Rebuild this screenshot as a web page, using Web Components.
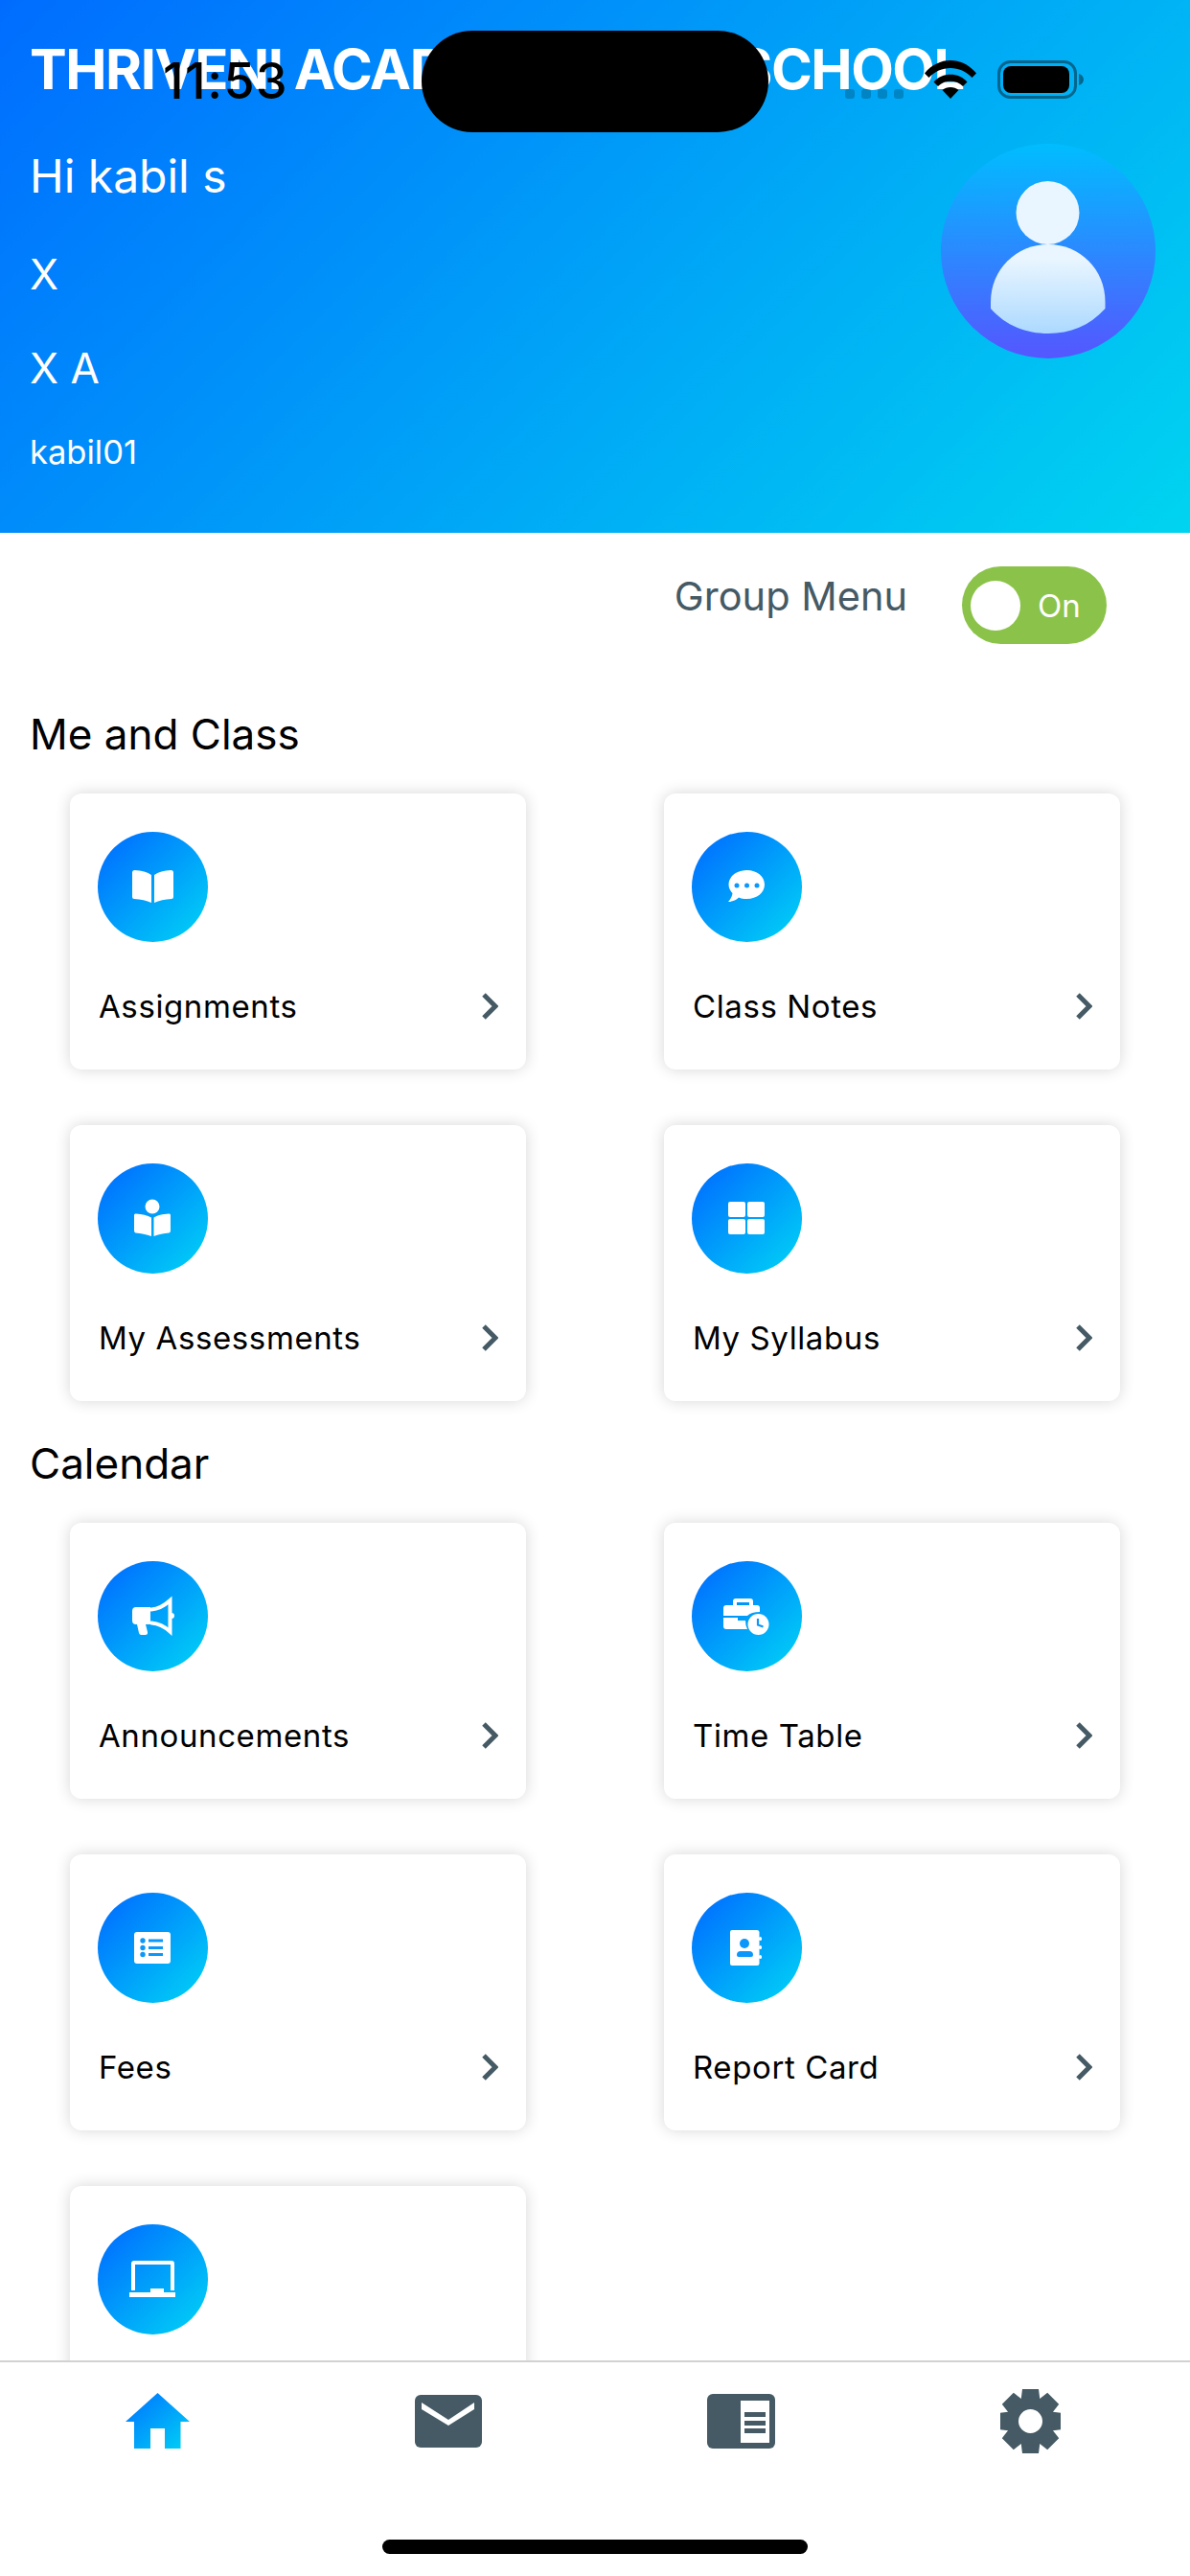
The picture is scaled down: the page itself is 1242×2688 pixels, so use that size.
<!DOCTYPE html>
<html>
<head>
<meta charset="utf-8">
<title>School</title>
<style>
html, body { margin: 0; padding: 0; background: #fff; }
body { font-family: Inter, "Liberation Sans", sans-serif; width: 1242px; height: 2688px; overflow: hidden; }
</style>
</head>
<body>
<app-shell>
  <status-bar slot="status"></status-bar>
  <app-header slot="header" title-left="THRIVENI ACADEMY" title-right="SCHOOL" greeting="Hi kabil s" grade="X" section="X A" user="kabil01"></app-header>
  <group-toggle>Group Menu</group-toggle>
  <menu-section heading="Me and Class">
    <menu-card icon="book">Assignments</menu-card>
    <menu-card icon="chat">Class Notes</menu-card>
    <menu-card icon="reader">My Assessments</menu-card>
    <menu-card icon="grid">My Syllabus</menu-card>
  </menu-section>
  <menu-section heading="Calendar" style="--top:35px">
    <menu-card icon="megaphone">Announcements</menu-card>
    <menu-card icon="case">Time Table</menu-card>
    <menu-card icon="list">Fees</menu-card>
    <menu-card icon="contact">Report Card</menu-card>
    <menu-card icon="laptop"></menu-card>
  </menu-section>
  <tab-bar slot="tabs"></tab-bar>
</app-shell>

<script>
const SLATE = '#455A64';

class AppShell extends HTMLElement {
    constructor() {
        super();
        this.attachShadow({mode: 'open'});
        this.shadowRoot.innerHTML = `
<style>
:host { display: flex; flex-direction: column; position: relative; width: 1242px; height: 2688px; overflow: hidden; background: #fff; }
.scroll { flex: 1; min-height: 0; overflow: hidden; }
</style>
<slot name="status"></slot>
<slot name="header"></slot>
<div class="scroll"><slot></slot></div>
<slot name="tabs"></slot>`;
    }
}

class StatusBar extends HTMLElement {
    constructor() {
        super();
        this.attachShadow({mode: 'open'});
        this.shadowRoot.innerHTML = `
<style>
:host { display: flex; align-items: flex-start; position: absolute; top: 0; left: 0; width: 1242px; height: 138px; z-index: 5; }
.time { margin: 57px 0 0 170px; width: 128px; font-size: 52px; line-height: 56px; font-weight: 500; letter-spacing: 1.5px; color: #000; white-space: nowrap; }
.pill { margin: 32px 0 0 142px; width: 362px; height: 106px; border-radius: 53px; background: #000; }
.dots { display: flex; gap: 7px; margin: 93px 0 0 80px; }
.dots i { width: 10px; height: 10px; border-radius: 3px; background: rgba(0, 0, 0, .2); }
.wifi { margin: 63px 0 0 22px; }
.battery { margin: 63px 0 0 22px; }
</style>
<div class="time">11:53</div>
<div class="pill"></div>
<div class="dots"><i></i><i></i><i></i><i></i></div>
<svg class="wifi" width="54" height="40" viewBox="0 0 54 40">
  <path d="M0 13.500 C14.500 -4.500 39.500 -4.500 54 13.500 L49.500 18 C37.500 4.500 16.500 4.500 4.500 18 Z" fill="#000"/>
  <path d="M9.500 22.500 C18 12 36 12 44.500 22.500 L40 27 C33 20 21 20 14 27 Z" fill="#000"/>
  <path d="M18.500 31 C23 27 31 27 35.500 31 L27 40 Z" fill="#000"/>
</svg>
<svg class="battery" width="90" height="40" viewBox="0 0 90 40">
  <rect x="1.500" y="1.500" width="80" height="37" rx="12" fill="none" stroke="rgba(0,0,0,.42)" stroke-width="3"/>
  <rect x="6" y="6" width="69" height="28" rx="8" fill="#000"/>
  <path d="M85 14 C88.500 15 90 17.500 90 20 C90 22.500 88.500 25 85 26 Z" fill="rgba(0,0,0,.42)"/>
</svg>`;
    }
}

class AppHeader extends HTMLElement {
    constructor() {
        super();
        this.attachShadow({mode: 'open'});
    }

    connectedCallback() {
        const a = (name) => this.getAttribute(name);
        this.shadowRoot.innerHTML = `
<style>
:host { display: block; box-sizing: border-box; height: 556px; padding: 42px 36px 0 31px; color: #fff; background: linear-gradient(135deg, #006cff 0%, #00d4f0 100%); }
.title { font-size: 58px; line-height: 60px; font-weight: 700; letter-spacing: -1.5px; white-space: nowrap; display: flex; }
.title .gap { width: 161px; }
.row { display: flex; justify-content: space-between; align-items: flex-start; }
.hi { margin-top: 52px; font-size: 48px; line-height: 60px; }
.line { margin-top: 42px; font-size: 44px; line-height: 60px; }
.line + .line { margin-top: 38px; }
.user { margin-top: 38px; font-size: 34.500px; line-height: 40px; }
.avatar { margin-top: 48px; }
</style>
<div class="title"><span>${a('title-left')}</span>&nbsp;<span class="gap"></span><span>${a('title-right')}</span></div>
<div class="row">
  <div>
    <div class="hi">${a('greeting')}</div>
    <div class="line">${a('grade')}</div>
    <div class="line">${a('section')}</div>
    <div class="user">${a('user')}</div>
  </div>
  <svg class="avatar" width="224" height="224" viewBox="0 0 224 224">
    <defs>
      <linearGradient id="ring" x1="0" y1="0" x2="0" y2="1"><stop offset="0" stop-color="#00bdff"/><stop offset="1" stop-color="#5556ff"/></linearGradient>
      <linearGradient id="body" gradientUnits="userSpaceOnUse" x1="0" y1="39" x2="0" y2="198"><stop offset="0" stop-color="#eaf6ff"/><stop offset=".5" stop-color="#eaf6ff"/><stop offset="1" stop-color="#acd9ff"/></linearGradient>
    </defs>
    <circle cx="112" cy="112" r="112" fill="url(#ring)"/>
    <circle cx="111.500" cy="72" r="33" fill="url(#body)"/>
    <path d="M52 172 V165 C52 131 79 105 112 105 C145 105 171.500 131 171.500 165 V172 C155 190 135 198 112 198 C89 198 68 190 52 172 Z" fill="url(#body)"/>
  </svg>
</div>`;
    }
}

class GroupToggle extends HTMLElement {
    constructor() {
        super();
        this.attachShadow({mode: 'open'});
        this.shadowRoot.innerHTML = `
<style>
:host { display: flex; justify-content: flex-end; align-items: center; gap: 57px; padding: 35px 87px 30px 0; color: ${SLATE}; font-size: 41.500px; }
.label { padding-bottom: 19px; }
.switch { display: flex; align-items: center; box-sizing: border-box; width: 151px; height: 81px; padding-left: 9px; border-radius: 41px; background: #8bc34a; color: #fff; font-size: 33px; }
.knob { width: 52px; height: 52px; border-radius: 50%; background: #fff; margin-right: 18px; }
</style>
<span class="label"><slot></slot></span>
<div class="switch"><div class="knob"></div><span>On</span></div>`;
    }
}

class MenuSection extends HTMLElement {
    constructor() {
        super();
        this.attachShadow({mode: 'open'});
    }

    connectedCallback() {
        this.shadowRoot.innerHTML = `
<style>
:host { display: block; padding-top: var(--top, 34px); }
h2 { margin: 0 0 32px 31px; font-size: 44px; line-height: 60px; font-weight: 400; color: #000; }
.grid { display: grid; grid-template-columns: 476px 476px; column-gap: 144px; row-gap: 58px; padding-left: 73px; }
</style>
<h2>${this.getAttribute('heading')}</h2>
<div class="grid"><slot></slot></div>`;
    }
}

// all glyphs are drawn in the coordinates of the 115px circle
const BLUE = '#0c97fa';
const menuIcons = {
    book: `<path d="M36 42.500 Q36 40 38.500 40 C46 40.500 52 42 56 45 V74 C51 71.500 45 70.500 38 70 Q36 70 36 68 Z"/>
           <path d="M79 42.500 Q79 40 76.500 40 C69 40.500 63 42 59 45 V74 C64 71.500 70 70.500 77 70 Q79 70 79 68 Z"/>`,
    chat: `<path d="M57.500 40 C68 40 76 46.500 76 55 C76 63.500 68 70 57.500 70 C54 70 51.500 69.500 49 68.500 C46 71.500 42 73 38 73 C40.500 70.500 42 67.500 42.500 64 C40 61.500 38.500 58.500 38.500 55 C38.500 46.500 47 40 57.500 40 Z"/>
           <g fill="${BLUE}"><circle cx="47" cy="56" r="2.500"/><circle cx="57.500" cy="56" r="2.500"/><circle cx="68" cy="56" r="2.500"/></g>`,
    reader: `<circle cx="57" cy="45" r="7.500"/>
           <path d="M38 54 Q38 52 40 52.500 C46 53 52 54 56 56.500 V76 C51 74 45 73 39.500 72.500 Q38 72 38 70 Z"/>
           <path d="M76 54 Q76 52 74 52.500 C68 53 62 54 58.500 56.500 V76 C63 74 69 73 74.500 72.500 Q76 72 76 70 Z"/>`,
    grid: `<rect x="38" y="40" width="18" height="16" rx="2"/><rect x="58" y="40" width="18" height="16" rx="2"/>
           <rect x="38" y="58" width="18" height="16" rx="2"/><rect x="58" y="58" width="18" height="16" rx="2"/>`,
    megaphone: `<path d="M40 48 H55 V66 H50 L52 74 Q52.500 77 49.500 77 H45.500 Q43.500 77 43 75 L41 66 H40 Q36 66 36 62 V52 Q36 48 40 48 Z"/>
           <path d="M56 50.500 C63 50 70 46 75.500 41 V73.500 C70 68.500 63 65 56 64.500" fill="none" stroke="#fff" stroke-width="4" stroke-linecap="round"/>
           <circle cx="77" cy="57" r="3"/>`,
    case: `<path d="M43 46 V42 Q43 39 46 39 H61 Q64 39 64 42 V46 H60 V43 H47 V46 Z"/>
           <path d="M36 46 H68 Q71 46 71 49 V53 Q62 53 58 57 H33 V49 Q33 46 36 46 Z"/>
           <path d="M33 59 H48 V62 H56 Q56 67 58 71 H36 Q33 71 33 68 Z"/>
           <circle cx="69.500" cy="66" r="11"/>
           <path d="M69 60 V66.500 L74.500 68.500" fill="none" stroke="${BLUE}" stroke-width="2.200"/>`,
    list: `<rect x="38" y="41" width="38" height="33" rx="3"/>
           <g fill="${BLUE}"><circle cx="47" cy="50" r="2.700"/><circle cx="47" cy="57.500" r="2.700"/><circle cx="47" cy="64.500" r="2.700"/>
           <rect x="53" y="48.500" width="15" height="3"/><rect x="53" y="56" width="15" height="3"/><rect x="53" y="63" width="15" height="3"/></g>`,
    contact: `<path d="M42 39 H68 Q70.500 39 70.500 41.500 V73.500 Q70.500 76 68 76 H42 Q40 76 40 74 V41 Q40 39 42 39 Z"/>
           <g><rect x="70" y="46" width="3" height="4" rx="1.500"/><rect x="70" y="55" width="3" height="4" rx="1.500"/><rect x="70" y="65" width="3" height="4" rx="1.500"/></g>
           <g fill="${BLUE}"><circle cx="55" cy="53" r="5"/><path d="M47 65 Q47 61 51 61 H60 Q64 61 64 65 Q64 67 62 67 H49 Q47 67 47 65 Z"/></g>`,
    laptop: `<path d="M37 69 V41 Q37 40 38 40 H77 Q78 40 78 41 V69" fill="none" stroke="#fff" stroke-width="4"/>
           <path d="M33 71 H55 V67 H69 V71 H81 V76 H33 Z"/>`
};

class MenuCard extends HTMLElement {
    constructor() {
        super();
        this.attachShadow({mode: 'open'});
    }

    connectedCallback() {
        this.shadowRoot.innerHTML = `
<style>
:host { display: block; box-sizing: border-box; width: 476px; height: 288px; padding: 40px 29px 0; border-radius: 12px; background: #fff; box-shadow: 0 0 16px rgba(0, 0, 0, .16); }
.dot { display: block; width: 115px; height: 115px; border-radius: 50%; background: linear-gradient(135deg, #0070ff 8%, #00cdf6 92%); }
.foot { display: flex; justify-content: space-between; align-items: center; margin-top: 45px; height: 44px; padding-left: 1px; font-size: 33px; letter-spacing: .6px; color: #000; }
</style>
<svg class="dot" viewBox="0 0 115 115" fill="#fff">${menuIcons[this.getAttribute('icon')]}</svg>
<div class="foot"><span><slot></slot></span>
  <svg width="17" height="28" viewBox="0 0 17 28"><path d="M2 2 L14 14 L2 26" fill="none" stroke="${SLATE}" stroke-width="5"/></svg>
</div>`;
    }
}

class TabBar extends HTMLElement {
    constructor() {
        super();
        this.attachShadow({mode: 'open'});
        const teeth = [0, 45, 90, 135, 180, 225, 270, 315]
            .map((deg) => `<path d="M23 0 H40 L41.500 12 H21.500 Z" transform="rotate(${deg} 31.500 33.500)"/>`).join('');
        this.shadowRoot.innerHTML = `
<style>
:host { display: flex; flex-direction: column; align-items: center; flex: none; box-sizing: border-box; height: 225px; position: relative; background: #fff; border-top: 2px solid #d2d2d2; }
.icons { display: flex; justify-content: space-between; box-sizing: border-box; width: 100%; height: 98px; padding: 28px 135px 0 131px; }
.home-bar { width: 444px; height: 15px; margin-top: 87px; border-radius: 8px; background: #000; }
</style>
<div class="icons">
  <svg width="67" height="70" viewBox="0 0 67 70">
    <defs><linearGradient id="active" x1="0" y1="0" x2="1" y2="1"><stop offset="0" stop-color="#0070ff"/><stop offset="1" stop-color="#00d2f5"/></linearGradient></defs>
    <path d="M33.500 4 L67 34 H57.500 V62 H41 V41 H26 V62 H9 V34 H0 Z" fill="url(#active)"/>
  </svg>
  <svg width="70" height="70" viewBox="0 0 70 70">
    <rect x="0" y="6" width="70" height="55" rx="6" fill="${SLATE}"/>
    <path d="M7 14 L35 32 L62 14 V21 L35 38 L7 21 Z" fill="#fff"/>
  </svg>
  <svg width="71" height="70" viewBox="0 0 71 70">
    <rect x="0" y="5" width="71" height="57" rx="6" fill="${SLATE}"/>
    <rect x="35" y="12" width="30" height="44" fill="#fff"/>
    <g fill="${SLATE}"><rect x="39" y="24" width="22" height="5"/><rect x="39" y="33" width="22" height="5"/><rect x="39" y="41" width="22" height="5"/></g>
  </svg>
  <svg width="63" height="70" viewBox="0 0 63 70" fill="${SLATE}">
    ${teeth}
    <path fill-rule="evenodd" d="M31.500 8.500 A25 25 0 1 1 31.500 58.500 A25 25 0 1 1 31.500 8.500 Z M31.500 21 A12.500 12.500 0 1 0 31.500 46 A12.500 12.500 0 1 0 31.500 21 Z"/>
  </svg>
</div>
<div class="home-bar"></div>`;
    }
}

customElements.define('app-shell', AppShell);
customElements.define('status-bar', StatusBar);
customElements.define('app-header', AppHeader);
customElements.define('group-toggle', GroupToggle);
customElements.define('menu-section', MenuSection);
customElements.define('menu-card', MenuCard);
customElements.define('tab-bar', TabBar);
</script>
</body>
</html>
